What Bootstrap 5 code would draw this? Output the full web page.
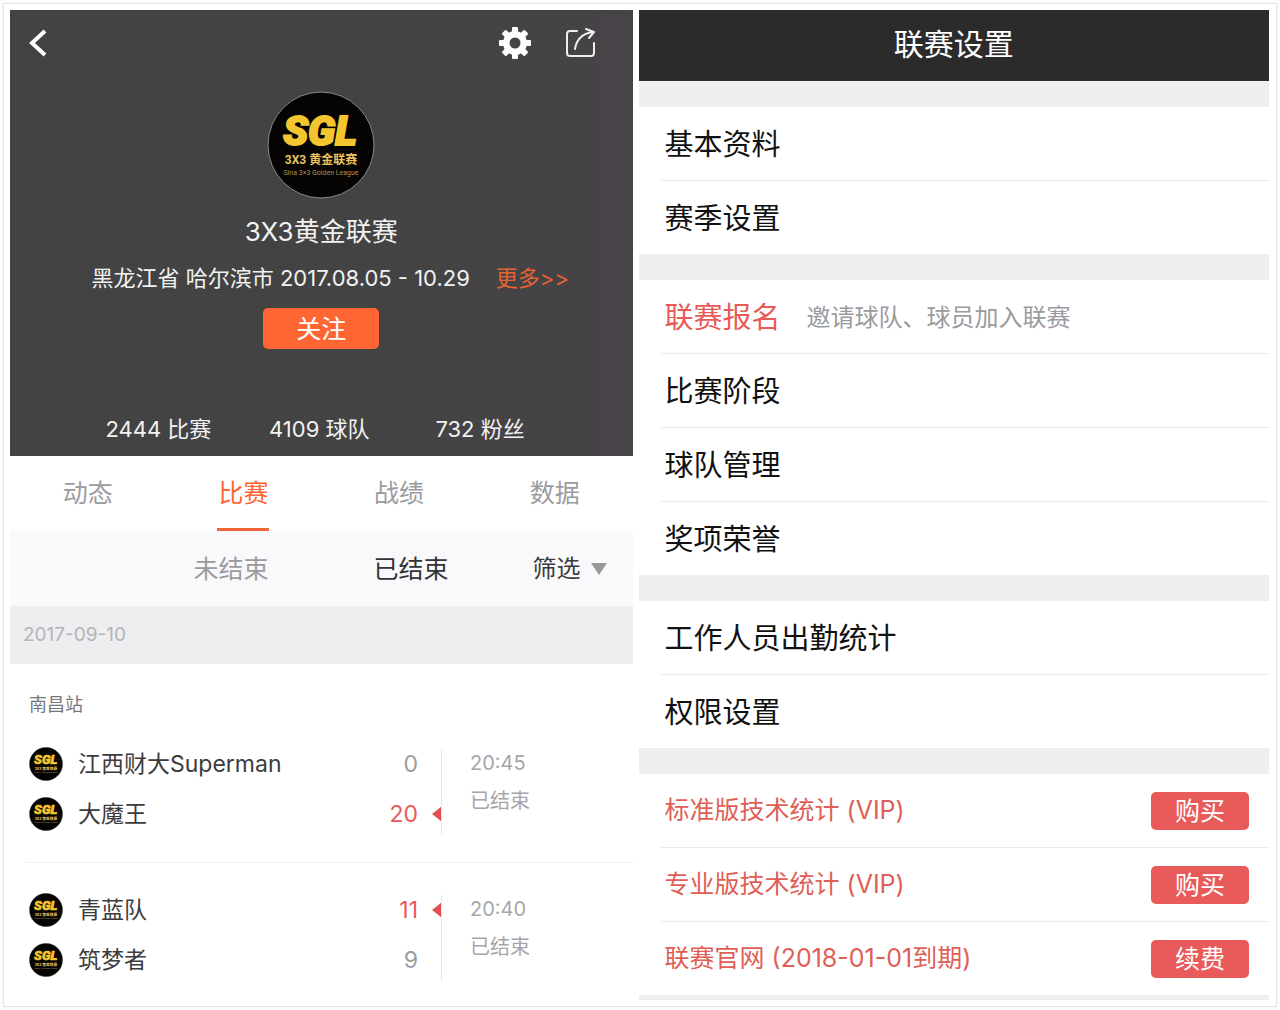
<!DOCTYPE html>
<html lang="zh-CN">
<head>
<meta charset="utf-8">
<meta name="viewport" content="width=device-width, initial-scale=1">
<title>3X3黄金联赛</title>
<link href="https://cdn.jsdelivr.net/npm/bootstrap@5.3.0/dist/css/bootstrap.min.css" rel="stylesheet">
<style>
  :root { --ink: #3c3c3e; --muted-ink: #9b9b9f; --accent: #ff6633; --accent-red: #e85a58; --band: #efeef0; }
  body { font-family: Inter, "Noto Sans CJK SC", sans-serif; background: #fff; color: var(--ink); }
  button, select { font-family: inherit; }
  .frame { margin: 3px; padding: 6px 7px 6px 6px; border: 1px solid #e6e6e6; box-shadow: 0 0 3px #ececec; }
  .panes { gap: 6px; }
  .pane-league { flex: 622 1 0; min-width: 0; }
  .pane-settings { flex: 630 1 0; min-width: 0; }

  /* league header */
  .hero { background: linear-gradient(90deg, #434343 55%, #474348); color: #f2f2f2; padding-bottom: 12px; }
  .hero-bar { padding: 15px 36px 0 18px; }
  .icon-btn { display: flex; padding: 0; border: 0; background: none; }
  .hero-icons { gap: 32px; }
  .hero-logo { width: 108px; height: 108px; margin-top: 30px; }
  .hero-name { font-size: 26px; line-height: 36px; margin: 15px 0 0; font-weight: 400; }
  .hero-info { font-size: 22px; line-height: 30px; margin-top: 13px; padding-left: 18px; gap: 26px; }
  .hero-info a { color: #e8642f; text-decoration: none; }
  .follow-btn { background: var(--accent); color: #fff; font-size: 25px; line-height: 29px; padding: 7px 32px 5px; border: 0; border-radius: 5px; margin-top: 15px; width: 116px; }
  .hero-stats { font-size: 22px; line-height: 30px; margin-top: 65px; padding: 0 72px 0 68px; }

  /* tabs and filters */
  .league-tabs { height: 75px; }
  .league-tabs .nav-link { height: 75px; padding: 18px 0 0; font-size: 25px; line-height: 38px; color: var(--muted-ink); }
  .league-tabs .nav-link.active { color: var(--accent); }
  .league-tabs .nav-link.active::after { content: ""; display: block; width: 52px; height: 3px; margin: 16px auto 0; background: #f0653a; }
  .filters { background: #f9f8fa; height: 75px; padding-right: 26px; }
  .filter-btn { padding: 0; border: 0; background: none; font-size: 25px; line-height: 36px; color: var(--muted-ink); }
  .filter-btn.is-on { color: #333336; margin: 0 84px 0 105px; }
  .filter-drop select { appearance: none; border: 0; background: none; padding: 0; margin: 0; font-size: 24px; line-height: 36px; color: var(--ink); }
  .filter-drop { gap: 10px; }

  /* matches */
  .date-bar { background: #eeedef; color: #b4b4b8; font-size: 19px; line-height: 58px; padding-left: 13px; }
  .station { font-size: 18px; line-height: 24px; padding: 29px 0 0 19px; margin: 0; font-weight: 400; color: #77777a; }
  .match { margin-left: 16px; padding: 22px 0 23px 3px; border-bottom: 1px solid #f0f0f3; }
  .match:last-child { border-bottom: 0; padding-bottom: 0; }
  .sides { width: 413px; }
  .sides::after { content: ""; position: absolute; right: 0; top: 10px; bottom: 4px; border-right: 1px solid #e6e6ea; }
  .side { height: 50px; font-size: 23px; line-height: 34px; }
  .side .team { margin-left: 15px; }
  .side .points { margin-left: auto; margin-right: 24px; color: var(--muted-ink); }
  .side.won .points { margin-right: 14px; color: var(--accent-red); }
  .when { font-size: 20px; line-height: 38px; color: #a6a6aa; padding: 5px 0 0 28px; }

  /* settings list */
  .settings-title { background: #2b2b2b; color: #fff; font-size: 30px; line-height: 41px; padding: 14px 0 16px; margin: 0; font-weight: 400; text-align: center; }
  .settings-group { border-top: 26px solid var(--band); }
  .settings-row { margin-left: 21px; padding: 17px 20px 15px 5px; font-size: 29px; line-height: 41px; color: #111; text-decoration: none; }
  .settings-row + .settings-row { border-top: 1px solid #ececf0; }
  .settings-row.hot { color: var(--accent-red); }
  .settings-row .hint { font-size: 24px; color: var(--muted-ink); margin-left: 26px; }
  .settings-row.paid { font-size: 25px; color: #df5f57; padding-top: 16px; padding-bottom: 16px; }
  .buy-btn { width: 98px; background: #e95a5a; color: #fff; border: 0; border-radius: 5px; font-size: 25px; line-height: 30px; padding: 4px 0; }
  .settings-end { height: 5px; background: var(--band); }
</style>
</head>
<body>
<div class="frame">
  <div class="panes d-flex">
    <section class="pane-league">
      <header class="hero text-center">
        <div class="hero-bar d-flex justify-content-between align-items-center">
          <button class="icon-btn" aria-label="返回">
            <svg width="20" height="36" viewBox="0 0 20 36" fill="none" stroke="#fff" stroke-width="4"><path d="M17 6 L4 18 L17 30"/></svg>
          </button>
          <div class="hero-icons d-flex align-items-center">
            <button class="icon-btn" aria-label="设置">
              <svg width="36" height="36" viewBox="-18 -18 36 36">
                <g fill="#fff">
                  <g id="teeth"><rect x="-3" y="-16" width="6" height="32" rx="1"/><rect x="-16" y="-3" width="32" height="6" rx="1"/></g>
                  <use href="#teeth" transform="rotate(45)"/>
                  <circle r="12"/>
                </g>
                <circle r="5.5" fill="#434343"/>
              </svg>
            </button>
            <button class="icon-btn" aria-label="分享">
              <svg width="32" height="36" viewBox="0 0 32 36" fill="none" stroke="#eee" stroke-width="2" stroke-linecap="round" stroke-linejoin="round">
                <path d="M12 6 H5 Q2 6 2 9 V28 Q2 31 5 31 H26 Q29 31 29 28 V18"/>
                <path d="M10 24 Q12 10 27 7 M21 4 L29 7 L24 13"/>
              </svg>
            </button>
          </div>
        </div>
        <svg class="hero-logo" viewBox="0 0 108 108" role="img" aria-label="SGL">
          <g id="sgl">
            <circle cx="54" cy="54" r="53" fill="#050403" stroke="#8b8b8b"/>
            <text x="53" y="54" text-anchor="middle" font-family="Roboto" font-weight="900" font-style="italic" font-size="41" fill="#f3c62f" stroke="#f3c62f" stroke-width="2">SGL</text>
            <text x="54" y="73" text-anchor="middle" font-family="Roboto, Noto Sans CJK SC" font-weight="700" font-size="12" fill="#e9c25c">3X3 黄金联赛</text>
            <text x="54" y="84" text-anchor="middle" font-family="Roboto" font-size="7" fill="#a8925c">Sina 3×3 Golden League</text>
          </g>
        </svg>
        <h1 class="hero-name">3X3黄金联赛</h1>
        <div class="hero-info d-flex justify-content-center">
          <span>黑龙江省 哈尔滨市 2017.08.05 - 10.29</span><a href="#">更多&gt;&gt;</a>
        </div>
        <button class="follow-btn">关注</button>
        <div class="hero-stats d-flex">
          <div class="flex-fill w-100">2444 比赛</div><div class="flex-fill w-100">4109 球队</div><div class="flex-fill w-100">732 粉丝</div>
        </div>
      </header>
      <nav class="league-tabs nav nav-justified">
        <a class="nav-link" href="#">动态</a>
        <a class="nav-link active" href="#" aria-current="page">比赛</a>
        <a class="nav-link" href="#">战绩</a>
        <a class="nav-link" href="#">数据</a>
      </nav>
      <div class="filters d-flex justify-content-end align-items-center">
        <button class="filter-btn">未结束</button>
        <button class="filter-btn is-on">已结束</button>
        <label class="filter-drop d-flex align-items-center">
          <select aria-label="筛选"><option>筛选</option></select>
          <svg width="16" height="12" viewBox="0 0 16 12"><path d="M0 0H16L8 12Z" fill="#98989b"/></svg>
        </label>
      </div>
      <div class="date-bar">2017-09-10</div>
      <h2 class="station">南昌站</h2>
      <div>
        <article class="match d-flex">
          <div class="sides position-relative">
            <div class="side d-flex align-items-center"><svg width="34" height="34" viewBox="0 0 108 108"><use href="#sgl"/></svg><span class="team">江西财大Superman</span><span class="points">0</span></div>
            <div class="side won d-flex align-items-center"><svg width="34" height="34" viewBox="0 0 108 108"><use href="#sgl"/></svg><span class="team">大魔王</span><span class="points">20</span><svg width="10" height="16" viewBox="0 0 10 16"><path d="M10 0V16L0 8Z" fill="#e2514f"/></svg></div>
          </div>
          <div class="when"><div>20:45</div><div>已结束</div></div>
        </article>
        <article class="match d-flex">
          <div class="sides position-relative">
            <div class="side won d-flex align-items-center"><svg width="34" height="34" viewBox="0 0 108 108"><use href="#sgl"/></svg><span class="team">青蓝队</span><span class="points">11</span><svg width="10" height="16" viewBox="0 0 10 16"><path d="M10 0V16L0 8Z" fill="#e2514f"/></svg></div>
            <div class="side d-flex align-items-center"><svg width="34" height="34" viewBox="0 0 108 108"><use href="#sgl"/></svg><span class="team">筑梦者</span><span class="points">9</span></div>
          </div>
          <div class="when"><div>20:40</div><div>已结束</div></div>
        </article>
      </div>
    </section>

    <section class="pane-settings">
      <h2 class="settings-title">联赛设置</h2>
      <div class="settings-group">
        <a class="settings-row d-flex" href="#">基本资料</a>
        <a class="settings-row d-flex" href="#">赛季设置</a>
      </div>
      <div class="settings-group">
        <a class="settings-row hot d-flex" href="#">联赛报名<span class="hint">邀请球队、球员加入联赛</span></a>
        <a class="settings-row d-flex" href="#">比赛阶段</a>
        <a class="settings-row d-flex" href="#">球队管理</a>
        <a class="settings-row d-flex" href="#">奖项荣誉</a>
      </div>
      <div class="settings-group">
        <a class="settings-row d-flex" href="#">工作人员出勤统计</a>
        <a class="settings-row d-flex" href="#">权限设置</a>
      </div>
      <div class="settings-group">
        <div class="settings-row paid d-flex justify-content-between align-items-center"><span>标准版技术统计 (VIP)</span><button class="buy-btn">购买</button></div>
        <div class="settings-row paid d-flex justify-content-between align-items-center"><span>专业版技术统计 (VIP)</span><button class="buy-btn">购买</button></div>
        <div class="settings-row paid d-flex justify-content-between align-items-center"><span>联赛官网 (2018-01-01到期)</span><button class="buy-btn">续费</button></div>
      </div>
      <div class="settings-end"></div>
    </section>
  </div>
</div>
<script src="https://cdn.jsdelivr.net/npm/bootstrap@5.3.0/dist/js/bootstrap.bundle.min.js"></script>
</body>
</html>
